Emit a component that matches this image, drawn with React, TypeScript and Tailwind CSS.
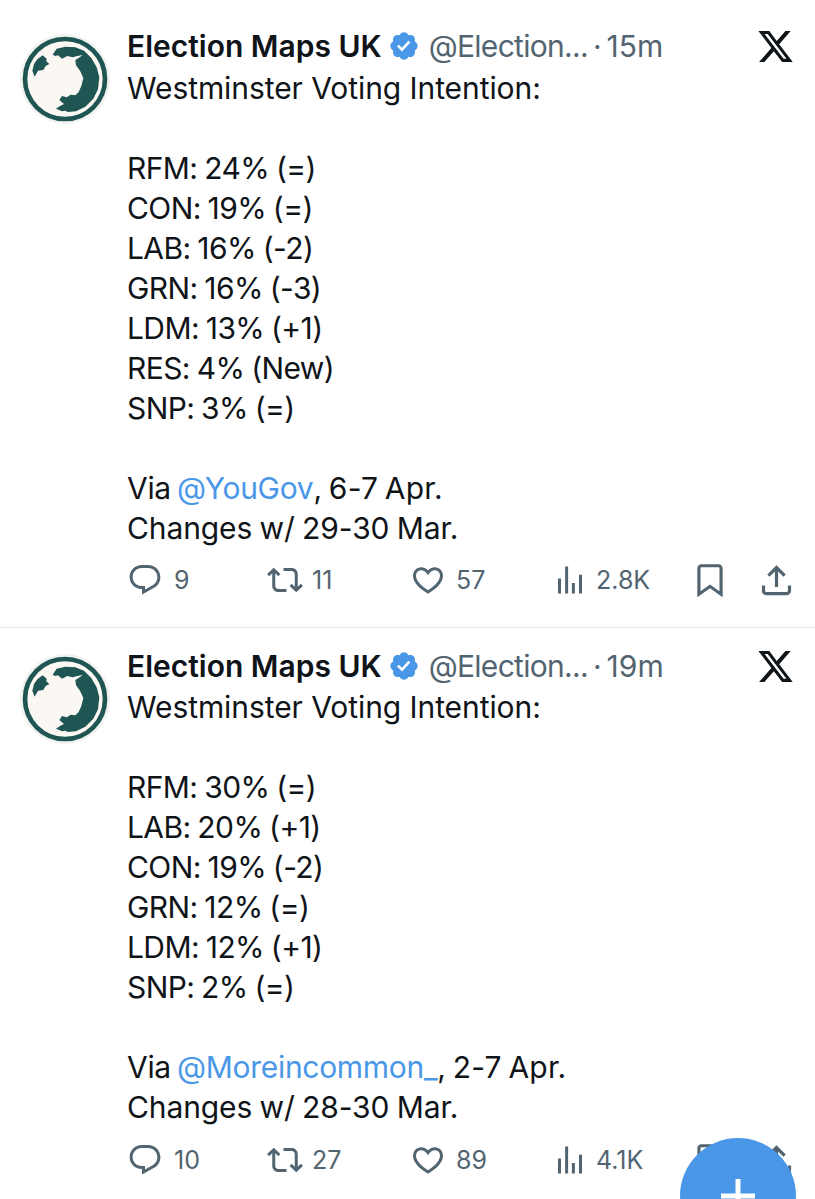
const paths = {
  reply: 'M1.751 10c0-4.42 3.584-8 8.005-8h4.366c4.49 0 8.129 3.64 8.129 8.13 0 2.96-1.607 5.68-4.196 7.11l-8.054 4.46v-3.69h-.067c-4.49.1-8.183-3.51-8.183-8.01zm8.005-6c-3.317 0-6.005 2.69-6.005 6 0 3.37 2.77 6.08 6.138 6.01l.351-.01h1.761v2.3l5.087-2.81c1.951-1.08 3.163-3.13 3.163-5.36 0-3.39-2.744-6.13-6.129-6.13H9.756z',
  retweet: 'M4.5 3.88l4.432 4.14-1.364 1.46L5.5 7.55V16c0 1.1.896 2 2 2H13v2H7.5c-2.209 0-4-1.79-4-4V7.55L1.432 9.48.068 8.02 4.5 3.88zM16.5 6H11V4h5.5c2.209 0 4 1.79 4 4v8.45l2.068-1.93 1.364 1.46-4.432 4.14-4.432-4.14 1.364-1.46 2.068 1.93V8c0-1.1-.896-2-2-2z',
  heart: 'M16.697 5.5c-1.222-.06-2.679.51-3.89 2.16l-.805 1.09-.806-1.09C9.984 6.01 8.526 5.44 7.304 5.5c-1.243.07-2.349.78-2.91 1.91-.552 1.12-.633 2.78.479 4.82 1.074 1.97 3.257 4.27 7.129 6.61 3.87-2.34 6.052-4.64 7.126-6.61 1.111-2.04 1.03-3.7.477-4.82-.561-1.13-1.666-1.84-2.908-1.91zm4.187 7.69c-1.351 2.48-4.001 5.12-8.379 7.67l-.503.3-.504-.3c-4.379-2.55-7.029-5.19-8.382-7.67-1.36-2.5-1.41-4.86-.514-6.67.887-1.79 2.647-2.91 4.601-3.01 1.651-.09 3.368.56 4.798 2.01 1.429-1.45 3.146-2.1 4.796-2.01 1.954.1 3.714 1.22 4.601 3.01.896 1.81.846 4.17-.514 6.67z',
  views: 'M8.75 21V3h2v18h-2zM18 21V8.5h2V21h-2zM4 21l.004-10h2L6 21H4zm9.248 0v-7h2v7h-2z',
  bookmark: 'M4 4.5C4 3.12 5.119 2 6.5 2h11C18.881 2 20 3.12 20 4.5v18.44l-8-5.71-8 5.71V4.5zM6.5 4c-.276 0-.5.22-.5.5v14.56l6-4.29 6 4.29V4.5c0-.28-.224-.5-.5-.5h-11z',
  share: 'M12 2.59l5.7 5.7-1.41 1.42L13 6.41V16h-2V6.41l-3.3 3.3-1.41-1.42L12 2.59zM21 15l-.02 3.51c0 1.38-1.12 2.49-2.5 2.49H5.5C4.11 21 3 19.88 3 18.5V15h2v3.5c0 .28.22.5.5.5h12.98c.28 0 .5-.22.5-.5L19 15h2z',
};

function ActionIcon({ name, className = 'w-[36px] h-[36px]' }: { name: keyof typeof paths; className?: string }) {
  return (
    <svg viewBox="0 0 24 24" className={`shrink-0 fill-[#536471] ${className}`} aria-hidden="true">
      <path d={paths[name]} />
    </svg>
  );
}

function Avatar() {
  return (
    <svg viewBox="60 40 270 270" className="w-[90px] h-[90px] shrink-0" aria-hidden="true">
      <circle cx="195" cy="175" r="135" fill="#f1f3f1" />
      <circle cx="195" cy="175" r="120" fill="#fbf7f3" stroke="#1f5654" strokeWidth="14" />
      <path
        fill="#1f5654"
        d="M128 104 L140 114 L139 122 L148 130 L137 136 L130 148 L114 150 L104 168 L97 150 L102 130 L112 116 Z M158 102 L170 84 L196 78 L226 80 L252 90 L274 112 L290 140 L298 170 L294 206 L280 234 L256 258 L228 272 L204 274 L196 270 L186 272 L168 264 L180 256 L192 250 L178 238 L186 226 L200 230 L212 222 L226 224 L236 214 L244 196 L250 172 L240 150 L228 134 L226 118 L236 112 L248 103 L232 106 L218 110 L202 106 L186 114 L174 104 L166 106 Z"
      />
    </svg>
  );
}

function Verified() {
  return (
    <svg viewBox="0 0 24 24" className="w-[32px] h-[32px] shrink-0" aria-hidden="true">
      <circle cx="12" cy="12" r="7" fill="#fff" />
      <path
        fill="#4a97e8"
        d="M22.25 12c0-1.43-.88-2.67-2.19-3.34.46-1.39.2-2.9-.81-3.91s-2.52-1.27-3.91-.81c-.66-1.31-1.91-2.19-3.34-2.19s-2.67.88-3.33 2.19c-1.4-.46-2.91-.2-3.92.81s-1.26 2.52-.8 3.91c-1.31.67-2.2 1.91-2.2 3.34s.89 2.67 2.2 3.34c-.46 1.39-.21 2.9.8 3.91s2.52 1.26 3.91.81c.67 1.31 1.91 2.19 3.34 2.19s2.68-.88 3.34-2.19c1.39.45 2.9.2 3.91-.81s1.27-2.52.81-3.91c1.31-.67 2.19-1.91 2.19-3.34zm-11.71 4.2L6.8 12.46l1.41-1.42 2.26 2.26 4.8-5.23 1.47 1.36-6.2 6.77z"
      />
    </svg>
  );
}

function Stat({ name, count, className, gap }: { name: keyof typeof paths; count: string; className: string; gap: string }) {
  return (
    <div className={`flex items-center shrink-0 ${className}`}>
      <ActionIcon name={name} />
      <span className={`${gap} text-[25px] leading-[36px] text-[#536471]`}>{count}</span>
    </div>
  );
}

type Tweet = {
  time: string;
  polls: string[];
  via: string;
  dates: string;
  changes: string;
  stats: string[];
  topClass: string;
  bodyClass: string;
  actionsClass: string;
};

const tweets: Tweet[] = [
  {
    time: '15m',
    polls: ['RFM: 24% (=)', 'CON: 19% (=)', 'LAB: 16% (-2)', 'GRN: 16% (-3)', 'LDM: 13% (+1)', 'RES: 4% (New)', 'SNP: 3% (=)'],
    via: '@YouGov',
    dates: ', 6-7 Apr.',
    changes: 'Changes w/ 29-30 Mar.',
    stats: ['9', '11', '57', '2.8K'],
    topClass: 'pt-[25px] pb-[29px] border-b border-[#e4e6e8]',
    bodyClass: 'pt-px',
    actionsClass: 'mt-[14px]',
  },
  {
    time: '19m',
    polls: ['RFM: 30% (=)', 'LAB: 20% (+1)', 'CON: 19% (-2)', 'GRN: 12% (=)', 'LDM: 12% (+1)', 'SNP: 2% (=)'],
    via: '@Moreincommon_',
    dates: ', 2-7 Apr.',
    changes: 'Changes w/ 28-30 Mar.',
    stats: ['10', '27', '89', '4.1K'],
    topClass: 'pt-[17px]',
    bodyClass: '',
    actionsClass: 'mt-[15px]',
  },
];

function TweetRow({ tweet }: { tweet: Tweet }) {
  return (
    <article className={`flex pl-[20px] pr-[22px] ${tweet.topClass}`}>
      <div className="mt-[9px] w-[107px] shrink-0">
        <Avatar />
      </div>
      <div className="min-w-0 flex-1">
        <header className="flex h-[42px] items-center">
          <span className="text-[30px] font-semibold text-[#0f1419]">Election Maps UK</span>
          <span className="ml-[6px]">
            <Verified />
          </span>
          <span className="ml-[9px] text-[30px] text-[#536471] tracking-[-0.7px]">@Election...</span>
          <span className="mx-[5px] text-[30px] text-[#536471]">·</span>
          <span className="text-[30px] text-[#536471]">{tweet.time}</span>
          <svg viewBox="1 2 22 20" className="ml-auto mt-[1px] w-[35px] h-[35px] fill-[#0f1419]" aria-hidden="true">
            <path d="M18.244 2.25h3.308l-7.227 8.26 8.502 11.24H16.17l-5.214-6.817L4.99 21.75H1.68l7.73-8.835L1.254 2.25H8.08l4.713 6.231zm-1.161 17.52h1.833L7.084 4.126H5.117z" />
          </svg>
        </header>
        <div className={`text-[30px] leading-[40px] text-[#0f1419] ${tweet.bodyClass}`}>
          <p className="tracking-[-0.07px]">Westminster Voting Intention:</p>
          <div className="mt-[40px] tracking-[-0.6px] [word-spacing:-1px]">
            {tweet.polls.map((line) => (
              <p key={line}>{line}</p>
            ))}
          </div>
          <p className="mt-[40px] tracking-[-0.3px] [word-spacing:-2px]">
            Via <span className="text-[#4a97e8]">{tweet.via}</span>
            <span className="tracking-[0.2px]">{tweet.dates}</span>
          </p>
          <p className="tracking-[-0.1px] [word-spacing:-1px]">{tweet.changes}</p>
        </div>
        <div className={`flex h-[36px] items-center ${tweet.actionsClass}`}>
          <Stat name="reply" count={tweet.stats[0]} gap="ml-[11px]" className="w-[139px]" />
          <Stat name="retweet" count={tweet.stats[1]} gap="ml-[9px]" className="w-[145px] ml-px" />
          <Stat name="heart" count={tweet.stats[2]} gap="ml-[10px]" className="w-[143px] -ml-[2px]" />
          <Stat name="views" count={tweet.stats[3]} gap="ml-[8px]" className="w-[139px] -ml-px" />
          <ActionIcon name="bookmark" className="w-[38px] h-[38px]" />
          <ActionIcon name="share" className="ml-[28px] w-[39px] h-[39px]" />
        </div>
      </div>
    </article>
  );
}

export default function App() {
  return (
    <main className="relative h-[1199px] w-[815px] overflow-hidden bg-white font-['Inter',sans-serif]">
      {tweets.map((tweet) => (
        <TweetRow key={tweet.time} tweet={tweet} />
      ))}
      {/* compose button, cut off by the bottom of the screen */}
      <button className="absolute left-[680px] top-[1138px] flex h-[116px] w-[116px] items-center justify-center rounded-full bg-[#4a97e8]" aria-label="Compose">
        <svg viewBox="0 0 34 34" className="h-[34px] w-[34px] stroke-white" aria-hidden="true">
          <path d="M17 0V34M0 17H34" strokeWidth="5" />
        </svg>
      </button>
    </main>
  );
}
